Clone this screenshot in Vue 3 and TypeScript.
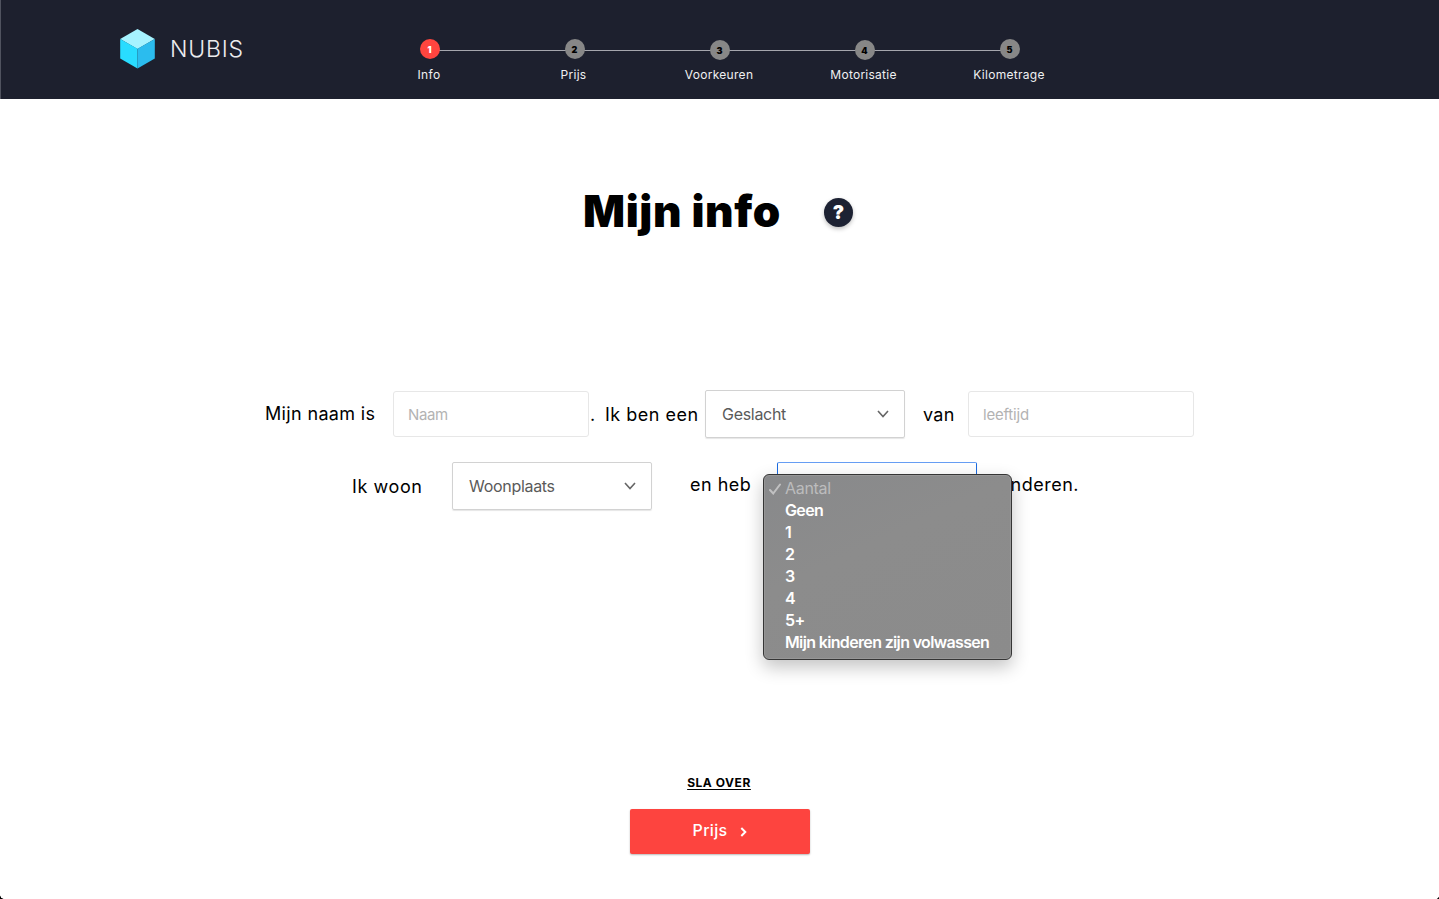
<script setup lang="ts">
import { ref } from 'vue'

interface Step {
  id: number
  label: string
  name: string
}

const steps: Step[] = [
  { id: 1, label: 'Info', name: 'info' },
  { id: 2, label: 'Prijs', name: 'prijs' },
  { id: 3, label: 'Voorkeuren', name: 'voorkeuren' },
  { id: 4, label: 'Motorisatie', name: 'motorisatie' },
  { id: 5, label: 'Kilometrage', name: 'kilometrage' },
]
const current = ref(1)
const options: string[] = ['Geen', '1', '2', '3', '4', '5+', 'Mijn kinderen zijn volwassen']
</script>

<template>
  <div class="page">
    <header class="header">
      <div class="brand">
        <svg class="cube" width="36" height="40" viewBox="0 0 36 40">
          <path d="M17.5 0 34.8 10 17.5 20 .2 10Z" fill="#a6f3ff" />
          <path d="M.2 10 17.5 19.8V39.6L.2 29.6Z" fill="#29dcff" />
          <path d="M34.8 10 17.5 19.8V39.6L34.8 29.6Z" fill="#2bbcee" />
        </svg>
        <span class="wordmark">NUBIS</span>
      </div>
      <ol class="steps">
        <li v-for="s in steps" :key="s.id" class="step" :class="[s.name, { active: s.id === current }]">
          <span class="dot">{{ s.id }}</span>
          <span class="label"><span>{{ s.label }}</span></span>
        </li>
      </ol>
    </header>

    <main class="main">
      <div class="heading">
        <h1><span>Mijn info</span></h1>
        <span class="help">?</span>
      </div>

      <div class="row first">
        <span class="words name">Mijn naam is</span>
        <div class="input name-input">Naam</div>
        <span class="words period">.</span>
        <span class="words gender">Ik ben een</span>
        <div class="select">
          <span class="value">Geslacht</span>
          <svg class="chevron" width="12" height="8" viewBox="0 0 12 8"><path d="M1 1 6 6.6 11 1" /></svg>
        </div>
        <span class="words van">van</span>
        <div class="input age-input">leeftijd</div>
      </div>

      <div class="row second">
        <span class="words woon">Ik woon</span>
        <div class="select city">
          <span class="value">Woonplaats</span>
          <svg class="chevron" width="12" height="8" viewBox="0 0 12 8"><path d="M1 1 6 6.6 11 1" /></svg>
        </div>
        <span class="words heb">en heb</span>
        <div class="select focused">
          <div class="menu">
            <div class="option checked">
              <svg class="check" width="12" height="12" viewBox="0 0 12 12"><path d="M1 7 4.2 10.5 11 1.5" /></svg>
              <span>Aantal</span>
            </div>
            <div v-for="o in options" :key="o" class="option"><span>{{ o }}</span></div>
          </div>
        </div>
        <span class="words kids">kinderen.</span>
      </div>

      <div class="actions">
        <a class="skip"><span>SLA OVER</span></a>
        <button class="next" type="button">
          <span>Prijs</span>
          <svg width="7" height="10" viewBox="0 0 7 10"><path d="M1.3 1 5.3 5 1.3 9" /></svg>
        </button>
      </div>
    </main>
    <i class="corner left"></i>
    <i class="corner right"></i>
  </div>
</template>

<style>
body {
  margin: 0;
  background: #fff;
}
</style>

<style scoped>
.page {
  position: relative;
  width: 1439px;
  height: 899px;
  overflow: hidden;
  background: #fff;
  color: #000;
  font-family: Inter, "Liberation Sans", sans-serif;
}
.header {
  box-sizing: border-box;
  height: 99px;
  display: flex;
  background: #1d202e;
  border-left: 1px solid #50535f;
  color: #fff;
}
.brand {
  display: flex;
  width: 238px;
  padding: 29px 0 0 119px;
}
.cube {
  flex: none;
}
.wordmark {
  margin: 4px 0 0 14px;
  color: #ececee;
  font-size: 23px;
  line-height: 32px;
  font-weight: 300;
  letter-spacing: 0.8px;
}
.steps {
  list-style: none;
  margin: 0 0 0 -1px;
  padding: 39px 0 0;
  display: grid;
  grid-template-columns: repeat(5, 145px);
  height: 50px;
}
.step {
  display: flex;
  flex-direction: column;
  align-items: center;
  background: linear-gradient(#a5a6ad, #a5a6ad) 0 11px / 100% 1px no-repeat;
}
.step:first-child {
  background-size: 50% 1px;
  background-position: 100% 11px;
}
.step:last-child {
  background-size: 50% 1px;
}
.dot {
  width: 20px;
  height: 20px;
  border-radius: 50%;
  background: #878787;
  color: #000;
  font-size: 9px;
  line-height: 21px;
  font-weight: 900;
  text-align: center;
}
.voorkeuren .dot,
.motorisatie .dot {
  margin: 1px 0 -1px;
}
.active .dot {
  background: #ff453f;
  color: #fff;
}
.label {
  margin: 8px 1px 0 0;
  color: #f0f0f2;
  font-size: 12px;
  line-height: 16px;
  white-space: nowrap;
  letter-spacing: 0.3px;
}
.prijs .label,
.motorisatie .label {
  margin-right: 2px;
}
.motorisatie .label {
  letter-spacing: 0.25px;
}
.heading {
  display: flex;
  padding: 82px 0 0 583px;
  height: 79px;
}
h1 {
  margin: 0;
  width: 241px;
  font-size: 44px;
  line-height: 60px;
  font-weight: 900;
  letter-spacing: 0.6px;
  white-space: nowrap;
}
.help {
  width: 29px;
  height: 29px;
  margin-top: 17px;
  border-radius: 50%;
  background: #1d2233;
  box-shadow: 0 2px 4px rgba(0, 0, 0, 0.25);
  color: #fff;
  font-size: 19px;
  line-height: 29px;
  font-weight: 900;
  text-align: center;
}
.row {
  display: flex;
  align-items: flex-start;
  height: 48px;
}
.first {
  padding: 130px 0 0 265px;
}
.second {
  padding: 24px 0 0 352px;
}
.words {
  flex: none;
  font-size: 18px;
  line-height: 24px;
  letter-spacing: 0.5px;
  white-space: nowrap;
}
.name {
  width: 128px;
  margin-top: 12px;
  letter-spacing: 0.35px;
}
.period {
  width: 15px;
  margin-top: 13px;
}
.gender {
  width: 100px;
  margin-top: 13px;
}
.van {
  width: 45px;
  margin: 13px 0 0 18px;
  letter-spacing: 0.3px;
}
.woon {
  width: 100px;
  margin-top: 13px;
  letter-spacing: 0.6px;
}
.heb {
  width: 87px;
  margin: 11px 0 0 38px;
}
.kids {
  width: 102px;
  margin-top: 11px;
  text-align: right;
}
.input {
  box-sizing: border-box;
  flex: none;
  height: 46px;
  margin-top: 1px;
  padding-left: 14px;
  border: 1px solid #e7e7e7;
  border-radius: 3px;
  color: #b3b3b3;
  font-size: 15px;
  line-height: 46px;
  letter-spacing: -0.4px;
}
.name-input {
  width: 196px;
  margin-right: 1px;
}
.age-input {
  width: 226px;
  letter-spacing: -0.2px;
}
.select {
  box-sizing: border-box;
  flex: none;
  position: relative;
  display: flex;
  justify-content: space-between;
  width: 200px;
  height: 48px;
  padding: 0 15px 0 16px;
  border: 1px solid #d2d2d2;
  border-radius: 2px;
  box-shadow: 0 1px 1px rgba(0, 0, 0, 0.1);
  color: #5a5a5a;
  font-size: 16px;
  line-height: 46px;
  letter-spacing: -0.3px;
}
.chevron {
  margin-top: 19px;
  fill: none;
  stroke: #666;
  stroke-width: 1.6;
}
.focused {
  border-color: #1b6be0;
  border-top-color: #659df3;
}
.menu {
  position: absolute;
  z-index: 2;
  left: -15px;
  top: 11px;
  box-sizing: border-box;
  width: 249px;
  height: 186px;
  padding: 2px 0 4px;
  border: 1px solid #353535;
  border-radius: 6px;
  background: linear-gradient(155deg, #88898b, #8c8c8c 40%, #8b8b8b);
  box-shadow: inset 0 0 0 1px #979797, 0 7px 18px rgba(0, 0, 0, 0.24);
}
.option {
  height: 22px;
  padding-left: 21px;
  color: #fff;
  font-size: 16px;
  line-height: 22px;
  font-weight: 600;
  letter-spacing: -0.65px;
  white-space: nowrap;
}
.checked {
  display: flex;
  padding-left: 5px;
  color: #bcbcbd;
  font-weight: 400;
  letter-spacing: -0.3px;
}
.check {
  margin: 6px 4px 0 0;
  fill: none;
  stroke: #c1c1c2;
  stroke-width: 2;
  stroke-linecap: round;
}
.actions {
  display: flex;
  flex-direction: column;
  align-items: center;
  padding-top: 265px;
}
.skip {
  margin-right: 1px;
  font-size: 12px;
  line-height: 16px;
  font-weight: 700;
  letter-spacing: 0.55px;
  text-decoration: underline;
  text-underline-offset: 2px;
}
.next {
  width: 180px;
  height: 45px;
  margin: 18px 0 0 1px;
  padding: 0;
  display: flex;
  justify-content: center;
  align-items: center;
  gap: 13px;
  border: 0;
  border-radius: 2px;
  background: #fd443f;
  box-shadow: 0 1px 2px rgba(0, 0, 0, 0.28);
  color: #fff;
  font: 500 16px/20px Inter, sans-serif;
  letter-spacing: 0.3px;
}
.next span {
  margin-top: -4px;
}
.next svg {
  fill: none;
  stroke: #fff;
  stroke-width: 2;
}
.corner {
  position: absolute;
  bottom: 0;
  width: 4px;
  height: 4px;
}
.left {
  left: 0;
  background: radial-gradient(circle at 100% 0, transparent 3.5px, #000 4px);
}
.right {
  right: 0;
  background: radial-gradient(circle at 0 0, transparent 3.8px, #000 4.6px);
}
</style>
